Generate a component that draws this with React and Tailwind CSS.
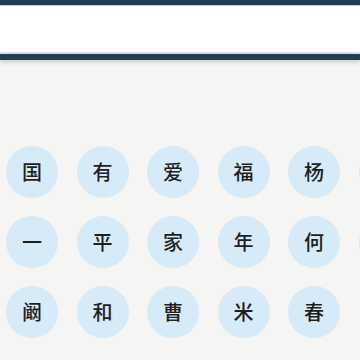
import React from "react";

const rows = [
  ["国", "有", "爱", "福", "杨", ""],
  ["一", "平", "家", "年", "何", ""],
  ["阚", "和", "曹", "米", "春"],
];

const App = () => {
  return (
    <div
      className="w-[360px] h-[360px] overflow-hidden bg-[#f5f5f4]"
      style={{ fontFamily: '"Noto Sans CJK SC", "Noto Sans", sans-serif' }}
    >
      {/* Header */}
      <div className="h-[5px] bg-[#1d3e53]" />
      <div className="h-[1px] bg-[#c9d0d6]" />
      <div className="h-[46px] bg-white" />
      <div className="h-[2px] bg-[#dde1e4]" />
      <div className="h-[6px] bg-[#1d3e53] shadow-[0_2px_4px_rgba(0,0,0,0.18)]" />

      {/* Chips */}
      <div className="pt-[86px] pl-[6px] flex flex-col gap-[18px]">
        {rows.map((row, i) => (
          <div key={i} className="flex gap-[18.5px] w-max">
            {row.map((ch, j) => (
              <div
                key={j}
                className="w-[52px] h-[52px] rounded-full bg-[#d6eaf8] flex items-center justify-center text-[20px] font-medium text-[#1f1f1f] leading-none"
              >
                {ch}
              </div>
            ))}
          </div>
        ))}
      </div>
    </div>
  );
};

export default App;
